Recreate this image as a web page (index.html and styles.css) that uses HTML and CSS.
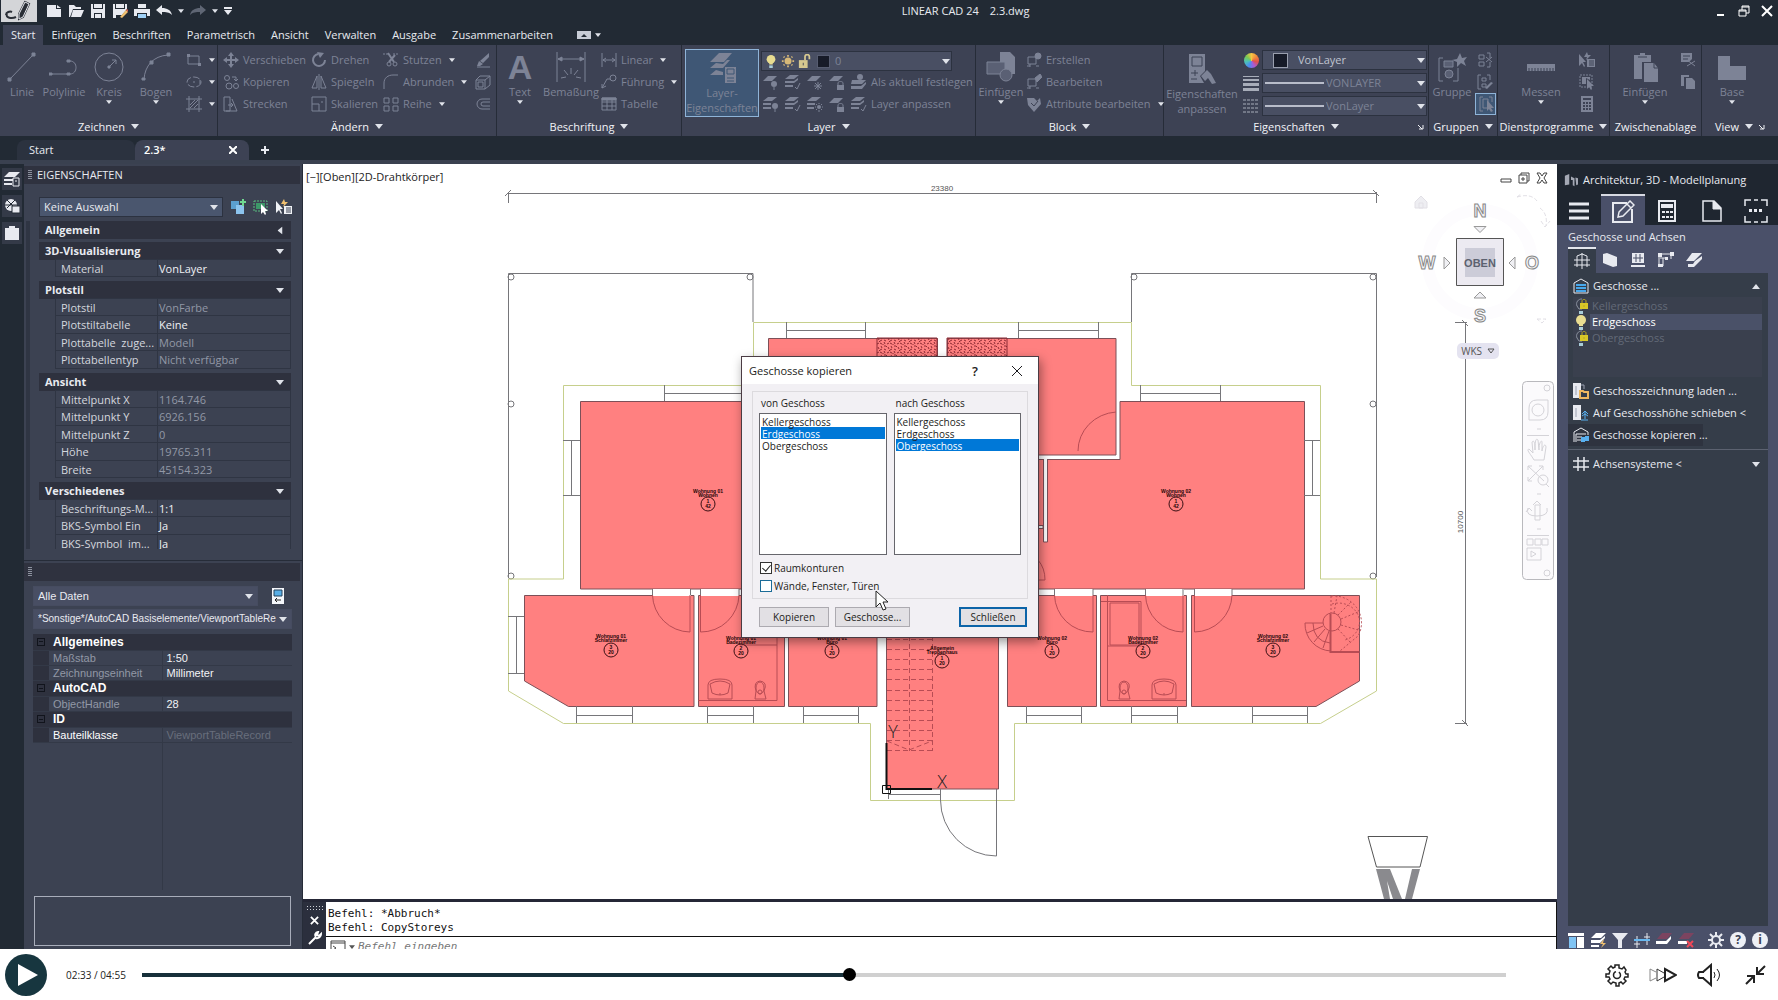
FILE: index.html
```html
<!DOCTYPE html>
<html lang="de">
<head>
  <meta charset="utf-8">
  <title>LINEAR CAD 24</title>
  <link rel="stylesheet" href="styles.css">
</head>
<body>
  <!-- icon set -->
  <svg class="sprite" aria-hidden="true">
    <symbol id="i-caret" viewBox="0 0 8 5"><path d="M0 0h8L4 5z" fill="currentColor" stroke="none"/></symbol>
    <symbol id="i-new" viewBox="0 0 16 16"><path d="M1 2h9v4h5v8H1zM11 2l4 3h-4z" fill="currentColor" stroke="none"/></symbol>
    <symbol id="i-open" viewBox="0 0 16 16"><path d="M1 14V2h5l2 2h5v2H5L2 14zM5 7h11l-3 7H3z" fill="currentColor" stroke="none"/></symbol>
    <symbol id="i-save" viewBox="0 0 16 16"><path d="M1 1h2v5h10V1h2v14h-3v-5H4v5H1zM4 1h8v4H4zM5 11h6v4H5z" fill="currentColor" stroke="none"/></symbol>
    <symbol id="i-saveas" viewBox="0 0 16 16"><path d="M1 1h2v5h10V1h2v5l-5 6H4v3H1zM4 1h8v4H4z" fill="currentColor" stroke="none"/><path d="M8 14l6-7 2 2-6 6z" fill="#f0c070" stroke="none"/><path d="M14 7l1-1 2 2-1 1z" fill="#e06050" stroke="none"/></symbol>
    <symbol id="i-print" viewBox="0 0 16 16"><path d="M4 1h8v4H4zM0 6h16v7h-3v-3H3v3H0z" fill="currentColor" stroke="none"/><path d="M4 11h8v4H4z" fill="#9fd0f5" stroke="none"/></symbol>
    <symbol id="i-undo" viewBox="0 0 16 16"><path d="M0 7l6-5v3c5 0 9 2 10 7-3-3-6-3-10-3v3z" fill="currentColor" stroke="none"/></symbol>
    <symbol id="i-redo" viewBox="0 0 16 16"><path d="M16 7l-6-5v3C5 5 1 7 0 12c3-3 6-3 10-3v3z" fill="currentColor" stroke="none"/></symbol>

    <symbol id="i-line" viewBox="0 0 30 30"><path d="M3 27L26 3"/><path d="M1 26h3v3H1zM25 1h3v3h-3z" fill="currentColor"/></symbol>
    <symbol id="i-poly" viewBox="0 0 30 30"><path d="M2 22h19c8 0 8-13 0-13"/><path d="M0 21h3v2H0zM18 21h3v2h-3zM18 8h3v2h-3z" fill="currentColor"/></symbol>
    <symbol id="i-circle" viewBox="0 0 30 30"><circle cx="15" cy="15" r="14"/><path d="M15 15l7-7M18 8h4v4"/><path d="M14 14h2v2h-2z" fill="currentColor"/></symbol>
    <symbol id="i-arc" viewBox="0 0 30 30"><path d="M3 27C4 14 12 4 27 3"/><path d="M1 26h3v2H1zM9 9h3v3H9zM26 1h3v3h-3z" fill="currentColor"/></symbol>
    <symbol id="i-rect" viewBox="0 0 16 16"><path d="M2 4h11v8H2z"/><path d="M1 2h3v3H1zM12 11h3v3h-3z" fill="currentColor" stroke="none"/></symbol>
    <symbol id="i-ellipse" viewBox="0 0 16 16"><ellipse cx="8" cy="8" rx="7" ry="5" stroke-dasharray="7 2"/><path d="M7 8h2M14 6v4" /></symbol>
    <symbol id="i-hatch" viewBox="0 0 16 16"><path d="M3 0v16M13 0v16M0 3h16M0 13h16M4 9l5-5M4 12l8-8M8 12l4-4"/></symbol>
    <symbol id="i-move" viewBox="0 0 16 16"><path d="M8 2v12M2 8h12" stroke-width="2"/><path d="M8 0l3 4H5zM8 16l3-4H5zM0 8l4-3v6zM16 8l-4-3v6z" fill="currentColor" stroke="none"/></symbol>
    <symbol id="i-copy" viewBox="0 0 16 16"><circle cx="4" cy="4" r="2.500"/><circle cx="6" cy="12" r="3"/><circle cx="13" cy="12" r="2.500"/><path d="M9 3h4v4M11 5l2 2 2-2"/></symbol>
    <symbol id="i-stretch" viewBox="0 0 16 16"><path d="M1 1h6v14H1zM9 3l5 12H3M5 9h5M8 7l2 2-2 2"/></symbol>
    <symbol id="i-rotate" viewBox="0 0 16 16"><path d="M7 2a6 6 0 1 0 7 6" stroke-width="2"/><path d="M6 0l7 1-4 5z" fill="currentColor" stroke="none"/></symbol>
    <symbol id="i-mirror" viewBox="0 0 16 16"><path d="M6 2v12H1zM10 2v12h5zM8 0v16"/></symbol>
    <symbol id="i-scale" viewBox="0 0 16 16"><path d="M1 1h14v14H1zM1 8h7v7M10 6h2"/></symbol>
    <symbol id="i-trim" viewBox="0 0 16 16"><path d="M0 2h5M10 2h6" stroke-dasharray="2 1"/><path d="M5 1l6 9M12 3L6 10" stroke-width="2"/><circle cx="6" cy="12" r="2"/><circle cx="12" cy="12" r="2"/></symbol>
    <symbol id="i-fillet" viewBox="0 0 16 16"><path d="M1 15V9C1 4 5 1 10 1h5"/></symbol>
    <symbol id="i-array" viewBox="0 0 16 16"><path d="M1 2h5v5H1zM10 2h5v5h-5zM1 10h5v5H1zM10 10h5v5h-5z"/></symbol>
    <symbol id="i-erase" viewBox="0 0 16 16"><path d="M14 1v4l-6 6-3-2zM4 9l4 3-3 2H2z" fill="currentColor" stroke="none"/><path d="M2 15h13"/></symbol>
    <symbol id="i-explode" viewBox="0 0 16 16"><path d="M1 6h9v9H1zM3 8h5v5H3zM1 6l4-4h10v9l-5 4M10 6l5-4"/></symbol>
    <symbol id="i-offset" viewBox="0 0 16 16"><path d="M15 3H7a5 5 0 0 0 0 10h8M15 6H8a2 2 0 0 0 0 4h7"/></symbol>
    <symbol id="i-dim" viewBox="0 0 30 30"><path d="M1 0v30M29 0v30M2 7h26M15 16v6M8 18l4 5M22 18l-4 5M5 26l5-1M25 26l-5-1"/><path d="M2 7l4-2v4zM28 7l-4-2v4z" fill="currentColor"/></symbol>
    <symbol id="i-linear" viewBox="0 0 16 16"><path d="M1 1v14M15 1v14M2 8h12M5 6L2 8l3 2M11 6l3 2-3 2"/></symbol>
    <symbol id="i-leader" viewBox="0 0 16 16"><circle cx="12" cy="4" r="3"/><path d="M9 5H6L1 14M1 10v4l4-2"/></symbol>
    <symbol id="i-table" viewBox="0 0 16 16"><path d="M1 2h14v12H1zM1 6h14M1 10h14M6 2v12M11 2v12"/><path d="M1 2h14v2H1z" fill="currentColor"/></symbol>
    <symbol id="i-layers" viewBox="0 0 30 30"><path d="M12 0h13l-8 9H3zM9 10l-6 5h13l7-8h-3l-4 4zM9 17l-6 5h13v-3zM18 14h11v16H18z" fill="currentColor" stroke="none"/><path d="M20 16h7v5h-7zM20 25h7M20 28h7" stroke="#3f5775"/></symbol>
    <symbol id="i-lay1" viewBox="0 0 16 16"><path d="M5 2h9l-5 5H0z" fill="currentColor" stroke="none"/><circle cx="11" cy="10" r="3" fill="currentColor" stroke="none"/><path d="M11 13v3"/></symbol>
    <symbol id="i-lay2" viewBox="0 0 16 16"><path d="M5 1h9l-5 4H0zM0 7h9l4-3v2L9 9H0zM0 11h8v2H0z" fill="currentColor" stroke="none"/><path d="M10 13l2 2 3-6"/></symbol>
    <symbol id="i-lay3" viewBox="0 0 16 16"><path d="M5 2h9l-5 5H0z" fill="currentColor" stroke="none"/><path d="M11 8v8M7 12h8M8 9l6 6M14 9l-6 6"/></symbol>
    <symbol id="i-lay4" viewBox="0 0 16 16"><path d="M5 2h9l-5 5H0zM8 11h7v5H8z" fill="currentColor" stroke="none"/><path d="M9 11V9c0-2 5-2 5 0v2"/></symbol>
    <symbol id="i-lay5" viewBox="0 0 16 16"><path d="M1 6h14l-4 4H0zM0 12h10l5-4v2l-4 5H0z" fill="currentColor" stroke="none"/><circle cx="9" cy="3" r="3" fill="currentColor" stroke="none"/></symbol>
    <symbol id="i-lay6" viewBox="0 0 16 16"><path d="M5 1h9l-5 4H0zM0 7h8v2H0zM0 11h8v2H0z" fill="currentColor" stroke="none"/><circle cx="12" cy="10" r="3" fill="currentColor" stroke="none"/><path d="M12 13v3"/></symbol>
    <symbol id="i-lay7" viewBox="0 0 16 16"><path d="M5 1h9l-5 4H0zM0 7h8v2H0zM0 11h7v2H0z" fill="currentColor" stroke="none"/><circle cx="12" cy="11" r="2" fill="currentColor" stroke="none"/><path d="M12 7v1M12 14v2M8 11h1M15 11h1M9 8l1 1M15 8l-1 1M9 14l1-1M15 14l-1-1"/></symbol>
    <symbol id="i-block" viewBox="0 0 30 30"><path d="M14 0h10l5 5v17H18v-9h-4z" fill="currentColor" stroke="none"/><path d="M1 10h18v12H1z" fill="#5a6074"/><circle cx="20" cy="23" r="6" fill="#5a6074"/></symbol>
    <symbol id="i-blk" viewBox="0 0 16 16"><path d="M2 5h8v7H2zM1 14h3M10 14h3M4 12v3"/><path d="M9 4l5-4 2 3-5 5z" fill="currentColor"/></symbol>
    <symbol id="i-blknew" viewBox="0 0 16 16"><path d="M2 5h8v7H2zM1 14h3M10 14h3M4 12v3"/><circle cx="12" cy="4" r="3" fill="currentColor"/></symbol>
    <symbol id="i-attr" viewBox="0 0 16 16"><path d="M1 2h7l3 3 3-3 1 6-7 8-6-7z" fill="currentColor" stroke="none"/><path d="M5 7l3 3 4-5" stroke="#3d4254"/></symbol>
    <symbol id="i-match" viewBox="0 0 30 30"><path d="M2 0h16v17l-5 5 4 7H2z" fill="currentColor" stroke="none"/><path d="M5 3h10v9H5zM4 19h7M8 16v6M4 25h6" stroke="#3d4254"/><path d="M14 22l6-6 4 4 5 9-4 1-4-6-3 3z" fill="currentColor" stroke="none"/></symbol>
    <symbol id="i-lw" viewBox="0 0 16 16"><path d="M0 1h16v1H0zM0 4h16v2H0zM0 8h16v3H0zM0 13h16v3H0z" fill="currentColor" stroke="none"/></symbol>
    <symbol id="i-lt" viewBox="0 0 16 16"><path d="M0 2h16M0 6h16M0 10h16M0 14h16" stroke-dasharray="3 1"/></symbol>
    <symbol id="i-group" viewBox="0 0 30 30"><path d="M6 6H2v23h4M16 29h5V16"/><path d="M7 9h9v6H7z" fill="#5a6074"/><circle cx="12" cy="22" r="4" fill="#5a6074"/><path d="M23 1l2 5 5-1-3 4 2 5-5-3-4 4v-5l-5-2 5-1z" fill="currentColor" stroke="none"/></symbol>
    <symbol id="i-ungroup" viewBox="0 0 16 16"><path d="M2 3h5v4H2zM2 10h5v4H2zM10 1h3v5M10 15h3v-5M9 5l6 5M15 5l-6 5"/></symbol>
    <symbol id="i-grp" viewBox="0 0 16 16"><path d="M4 1H1v14h3M10 1h3v5M5 4h4v3H5zM5 10h4v3H5z"/><path d="M8 14l6-6 2 1-6 6z" fill="currentColor" stroke="none"/></symbol>
    <symbol id="i-grpsel" viewBox="0 0 16 16"><path d="M4 1H1v14h3M10 1h3v5M4 3h5v9H4z"/><path d="M8 4v11l2-2 2 3 2-1-2-3h3z" fill="currentColor" stroke="none"/></symbol>
    <symbol id="i-ruler" viewBox="0 0 30 30"><path d="M1 12h28v7H1z" fill="currentColor" stroke="none"/><path d="M3 19v-3M6 19v-3M9 19v-3M12 19v-3M15 19v-3M18 19v-3M21 19v-3M24 19v-3M27 19v-3" stroke="#3d4254"/></symbol>
    <symbol id="i-qsel" viewBox="0 0 16 16"><path d="M0 2v12l3-3 2 4 1-1-2-4h3zM8 0L5 5h3L7 8l5-5H9zM8 7h8v8H8z" fill="currentColor" stroke="none"/><path d="M10 9h5M10 11h5M10 13h5" stroke="#3d4254"/></symbol>
    <symbol id="i-selall" viewBox="0 0 16 16"><path d="M1 1h12v12H1z" stroke-dasharray="2 1"/><path d="M3 3h8v3l-4-2v6H3zM8 5v10l2-2 2 3 1-1-1-3h3z" fill="currentColor" stroke="none"/></symbol>
    <symbol id="i-calc" viewBox="0 0 16 16"><path d="M2 0h12v16H2z" fill="currentColor" stroke="none"/><path d="M4 3h8M4 7h2M7 7h2M10 7h2M4 10h2M7 10h2M10 10h2M4 13h2M7 13h2M10 13h2" stroke="#3d4254" stroke-width="2"/></symbol>
    <symbol id="i-paste" viewBox="0 0 30 30"><path d="M4 3h6V1h5v2h6v7h-9v17H4zM14 11h10l4 5v14H14z" fill="currentColor" stroke="none"/><path d="M8 5h9M24 11v5h4" stroke="#3d4254"/></symbol>
    <symbol id="i-cut" viewBox="0 0 16 16"><path d="M1 1h11v6l-3 3H1z" fill="currentColor" stroke="none"/><path d="M3 4h7M3 7h5" stroke="#3d4254"/><path d="M7 8l8 6M15 9l-8 5"/></symbol>
    <symbol id="i-cpy" viewBox="0 0 16 16"><path d="M1 1h8v2H4v9H1zM6 4h6l3 3v8H6z" fill="currentColor" stroke="none"/></symbol>
    <symbol id="i-base" viewBox="0 0 30 30"><path d="M1 4h12v10h16v14H1z" fill="currentColor" stroke="none"/></symbol>
    <symbol id="i-stack" viewBox="0 0 16 16"><path d="M5 1h11l-5 5H0zM0 8h9v2H0zM0 12h8v2H0z" fill="currentColor" stroke="none"/><path d="M9 7h6v8H9zM11 10h2"/></symbol>
    <symbol id="i-clip" viewBox="0 0 16 16"><path d="M1 3h4V1h6v2h4v12H1z" fill="currentColor" stroke="none"/></symbol>
    <symbol id="i-world" viewBox="0 0 16 16"><circle cx="7" cy="7" r="6" fill="currentColor" stroke="none"/><path d="M1 7h12M3 2l8 8M11 2L3 10" stroke="#222a34"/><path d="M8 8h8v7H8z" fill="currentColor" stroke="#222a34"/></symbol>
    <symbol id="i-bulb" viewBox="0 0 16 16"><circle cx="8" cy="6" r="5" fill="#e8dc90" stroke="none"/><path d="M6 10h4v2H6z" fill="#e8dc90" stroke="none"/><path d="M6 13h4v3H6z" fill="#a8ccd8" stroke="none"/></symbol>
    <symbol id="i-bulblock" viewBox="0 0 16 16"><path d="M9 1a5 5 0 0 0-5 7l2 3h3" stroke="#8c93a0"/><path d="M6 13h4v3H6z" fill="#a8ccd8" stroke="none"/><path d="M7 5h8v6H7z" fill="#d8c828" stroke="none"/><path d="M9 5V3c0-2 4-2 4 0v2M11 7v2" stroke="#b8a820"/></symbol>
    <symbol id="i-sun" viewBox="0 0 16 16"><circle cx="8" cy="8" r="4" fill="#d6b878" stroke="none"/><path d="M8 1v2M8 13v2M1 8h2M13 8h2M3 3l1 1M12 12l1 1M13 3l-1 1M4 12l-1 1" stroke="#d6b878" stroke-width="2"/></symbol>
    <symbol id="i-unlock" viewBox="0 0 16 16"><path d="M1 7h10v9H1z" fill="#d6c890" stroke="none"/><path d="M8 7V3c0-3 5-3 5 0v3" stroke="#d6c890" stroke-width="2"/><path d="M6 10v3" stroke="#3d4254"/></symbol>
    <symbol id="i-storey" viewBox="0 0 16 16"><path d="M1 15V5l7-4 7 4v10z"/><path d="M3 6h10v2H3zM3 9h10v2H3zM3 12h10v2H3z" fill="#48a8ec" stroke="none"/></symbol>
    <symbol id="i-storeyload" viewBox="0 0 16 16"><path d="M0 0h8v15H0z" fill="currentColor" stroke="none"/><path d="M8 2h3v4M3 3v9" stroke="#9aa0b0"/><path d="M7 15V8h3l1 1h4v6z" fill="#353d49" stroke="#f0b860" stroke-width="2"/></symbol>
    <symbol id="i-storeymove" viewBox="0 0 16 16"><path d="M0 0h8v15H0z" fill="currentColor" stroke="none"/><path d="M3 3v9" stroke="#9aa0b0"/><path d="M8 15h7M12 6v8M9 9l3-3 3 3M9 11l3-2 3 2" stroke="#58b0f0"/></symbol>
    <symbol id="i-storeycopy" viewBox="0 0 16 16"><path d="M1 15V5l7-4 7 4v3M3 15V7h10M4 10h5M4 13h4"/><path d="M8 10h4v5H8zM12 9h4v5h-4z" fill="#58b0f0" stroke="none"/></symbol>
    <symbol id="i-axes" viewBox="0 0 16 16"><path d="M5 1v14M11 1v14M0 5h16M0 11h16" stroke-width="1.500"/></symbol>
    <symbol id="i-grid" viewBox="0 0 16 16"><path d="M8 0v16M0 7h16M3 3v11M13 3v11M0 12h16M3 3l5-2 5 2"/></symbol>
    <symbol id="i-wall" viewBox="0 0 16 16"><path d="M1 2l4-1 10 4v9l-4 1L1 11z" fill="currentColor" stroke="none"/></symbol>
    <symbol id="i-window" viewBox="0 0 16 16"><path d="M2 1h12v10H2zM1 13h14v2H1z" fill="currentColor" stroke="none"/><path d="M6 2v8M10 2v8M3 6h10" stroke="#4a5069"/></symbol>
    <symbol id="i-beam" viewBox="0 0 16 16"><path d="M2 2h12M2 6h8M1 2v12M5 6v8M13 2v5"/><path d="M0 1h4v4H0zM12 0h4v4h-4zM0 12h5v3H0zM7 5h3v3H7z" fill="currentColor" stroke="none"/></symbol>
    <symbol id="i-slab" viewBox="0 0 16 16"><path d="M6 1h10l-8 8H0zM9 9l7-5v3l-8 8H2v-3h5z" fill="currentColor" stroke="none"/></symbol>
  </svg>

  <main class="app">
    <header class="titlebar">
      <div class="quick">
        <button class="logo" aria-label="Anwendung"><svg viewBox="0 0 36 22"><path d="M24 2l4 2-6 13-4 2v-5zM6 14c-2 4 5 5 9 3M11 12c-2-1-6 0-6 3" fill="none" stroke="#2a2e36" stroke-width="2"/><path d="M24 2l4 2-6 13-4 2v-5z" fill="#2a2e36"/></svg></button>
        <button aria-label="Neu"><svg class="ico"><use href="#i-new"/></svg></button>
        <button aria-label="Öffnen"><svg class="ico"><use href="#i-open"/></svg></button>
        <button aria-label="Speichern"><svg class="ico"><use href="#i-save"/></svg></button>
        <button aria-label="Speichern unter"><svg class="ico"><use href="#i-saveas"/></svg></button>
        <button aria-label="Drucken"><svg class="ico"><use href="#i-print"/></svg></button>
        <button aria-label="Zurück"><svg class="ico"><use href="#i-undo"/></svg><svg class="caret"><use href="#i-caret"/></svg></button>
        <button class="dim" aria-label="Wiederherstellen"><svg class="ico"><use href="#i-redo"/></svg><svg class="caret"><use href="#i-caret"/></svg></button>
        <button aria-label="Anpassen"><svg class="more" viewBox="0 0 8 8"><path d="M0 0h8v2H0zM0 3h8L4 8z" fill="currentColor"/></svg></button>
      </div>
      <h1 class="title"><span>LINEAR CAD 24</span><span>2.3.dwg</span></h1>
      <div class="winctl">
        <button aria-label="Minimieren"><svg viewBox="0 0 12 12"><path d="M2 10h7" stroke-width="2"/></svg></button>
        <button aria-label="Verkleinern"><svg viewBox="0 0 12 12"><path d="M1 5h7v6H1zM4 5V1h7v7H8M1 6h7M4 2h7"/></svg></button>
        <button aria-label="Schließen"><svg viewBox="0 0 12 12"><path d="M1 1l10 10M11 1L1 11" stroke-width="2"/></svg></button>
      </div>
    </header>

    <nav class="tabs">
      <a class="active" href="#">Start</a>
      <a href="#">Einfügen</a>
      <a href="#">Beschriften</a>
      <a href="#">Parametrisch</a>
      <a href="#">Ansicht</a>
      <a href="#">Verwalten</a>
      <a href="#">Ausgabe</a>
      <a href="#">Zusammenarbeiten</a>
      <button aria-label="Multifunktionsleiste"><svg class="mini" viewBox="0 0 14 8"><path d="M0 0h14v8H0z" fill="#c8ccd6"/><path d="M4 6h6L7 3z" fill="#222a34"/></svg><svg class="caret"><use href="#i-caret"/></svg></button>
    </nav>

    <section class="ribbon">
      <div class="panel draw">
        <div class="panel-body">
          <button class="big"><svg><use href="#i-line"/></svg>Linie</button>
          <button class="big"><svg><use href="#i-poly"/></svg>Polylinie</button>
          <button class="big"><svg><use href="#i-circle"/></svg>Kreis<svg class="caret"><use href="#i-caret"/></svg></button>
          <button class="big"><svg><use href="#i-arc"/></svg>Bogen<svg class="caret"><use href="#i-caret"/></svg></button>
          <div class="stack">
            <button class="tool" aria-label="Rechteck"><svg class="ico"><use href="#i-rect"/></svg><svg class="caret"><use href="#i-caret"/></svg></button>
            <button class="tool" aria-label="Ellipse"><svg class="ico"><use href="#i-ellipse"/></svg><svg class="caret"><use href="#i-caret"/></svg></button>
            <button class="tool" aria-label="Schraffur"><svg class="ico"><use href="#i-hatch"/></svg><svg class="caret"><use href="#i-caret"/></svg></button>
          </div>
        </div>
        <button class="panel-title">Zeichnen<svg class="caret"><use href="#i-caret"/></svg></button>
      </div>

      <div class="panel modify">
        <div class="panel-body">
          <div class="stack">
            <button class="tool"><svg class="ico"><use href="#i-move"/></svg>Verschieben</button>
            <button class="tool"><svg class="ico"><use href="#i-copy"/></svg>Kopieren</button>
            <button class="tool"><svg class="ico"><use href="#i-stretch"/></svg>Strecken</button>
          </div>
          <div class="stack">
            <button class="tool"><svg class="ico"><use href="#i-rotate"/></svg>Drehen</button>
            <button class="tool"><svg class="ico"><use href="#i-mirror"/></svg>Spiegeln</button>
            <button class="tool"><svg class="ico"><use href="#i-scale"/></svg>Skalieren</button>
          </div>
          <div class="stack">
            <button class="tool"><svg class="ico"><use href="#i-trim"/></svg>Stutzen<svg class="caret"><use href="#i-caret"/></svg></button>
            <button class="tool"><svg class="ico"><use href="#i-fillet"/></svg>Abrunden<svg class="caret"><use href="#i-caret"/></svg></button>
            <button class="tool"><svg class="ico"><use href="#i-array"/></svg>Reihe<svg class="caret"><use href="#i-caret"/></svg></button>
          </div>
          <div class="stack">
            <button class="tool" aria-label="Löschen"><svg class="ico"><use href="#i-erase"/></svg></button>
            <button class="tool" aria-label="Ursprung"><svg class="ico"><use href="#i-explode"/></svg></button>
            <button class="tool" aria-label="Versetzen"><svg class="ico"><use href="#i-offset"/></svg></button>
          </div>
        </div>
        <button class="panel-title">Ändern<svg class="caret"><use href="#i-caret"/></svg></button>
      </div>

      <div class="panel annotate">
        <div class="panel-body">
          <button class="big"><span class="letter">A</span>Text<svg class="caret"><use href="#i-caret"/></svg></button>
          <button class="big"><svg><use href="#i-dim"/></svg>Bemaßung</button>
          <div class="stack">
            <button class="tool"><svg class="ico"><use href="#i-linear"/></svg>Linear<svg class="caret"><use href="#i-caret"/></svg></button>
            <button class="tool"><svg class="ico"><use href="#i-leader"/></svg>Führung<svg class="caret"><use href="#i-caret"/></svg></button>
            <button class="tool"><svg class="ico"><use href="#i-table"/></svg>Tabelle</button>
          </div>
        </div>
        <button class="panel-title">Beschriftung<svg class="caret"><use href="#i-caret"/></svg></button>
      </div>

      <div class="panel layer">
        <div class="panel-body">
          <button class="big pressed"><svg><use href="#i-layers"/></svg>Layer-<br>Eigenschaften</button>
          <div class="stack">
            <div class="drop">
              <svg class="ico"><use href="#i-bulb"/></svg><svg class="ico"><use href="#i-sun"/></svg><svg class="ico"><use href="#i-unlock"/></svg>
              <span class="swatch"></span>
              <select aria-label="Layer"><option>0</option></select>
              <svg class="caret"><use href="#i-caret"/></svg>
            </div>
            <div class="row">
              <button class="tool" aria-label="Aus"><svg class="ico"><use href="#i-lay1"/></svg></button>
              <button class="tool" aria-label="Isolieren"><svg class="ico"><use href="#i-lay2"/></svg></button>
              <button class="tool" aria-label="Frieren"><svg class="ico"><use href="#i-lay3"/></svg></button>
              <button class="tool" aria-label="Sperren"><svg class="ico"><use href="#i-lay4"/></svg></button>
              <button class="tool"><svg class="ico"><use href="#i-lay5"/></svg>Als aktuell festlegen</button>
            </div>
            <div class="row">
              <button class="tool" aria-label="Ein"><svg class="ico"><use href="#i-lay6"/></svg></button>
              <button class="tool" aria-label="Isolierung aufheben"><svg class="ico"><use href="#i-lay2"/></svg></button>
              <button class="tool" aria-label="Tauen"><svg class="ico"><use href="#i-lay7"/></svg></button>
              <button class="tool" aria-label="Entsperren"><svg class="ico"><use href="#i-lay4"/></svg></button>
              <button class="tool"><svg class="ico"><use href="#i-lay2"/></svg>Layer anpassen</button>
            </div>
          </div>
        </div>
        <button class="panel-title">Layer<svg class="caret"><use href="#i-caret"/></svg></button>
      </div>

      <div class="panel block">
        <div class="panel-body">
          <button class="big"><svg><use href="#i-block"/></svg>Einfügen<svg class="caret"><use href="#i-caret"/></svg></button>
          <div class="stack">
            <button class="tool"><svg class="ico"><use href="#i-blknew"/></svg>Erstellen</button>
            <button class="tool"><svg class="ico"><use href="#i-blk"/></svg>Bearbeiten</button>
            <button class="tool"><svg class="ico"><use href="#i-attr"/></svg>Attribute bearbeiten<svg class="caret"><use href="#i-caret"/></svg></button>
          </div>
        </div>
        <button class="panel-title">Block<svg class="caret"><use href="#i-caret"/></svg></button>
      </div>

      <div class="panel props">
        <div class="panel-body">
          <button class="big"><svg><use href="#i-match"/></svg>Eigenschaften<br>anpassen</button>
          <div class="stack icons">
            <span class="wheel"></span>
            <svg class="ico"><use href="#i-lw"/></svg>
            <svg class="ico"><use href="#i-lt"/></svg>
          </div>
          <div class="stack">
            <div class="drop bright"><span class="swatch"></span><select aria-label="Farbe"><option>VonLayer</option></select><svg class="caret"><use href="#i-caret"/></svg></div>
            <div class="drop"><span class="rule"></span><select aria-label="Linienstärke"><option>VONLAYER</option></select><svg class="caret"><use href="#i-caret"/></svg></div>
            <div class="drop"><span class="rule"></span><select aria-label="Linientyp"><option>VonLayer</option></select><svg class="caret"><use href="#i-caret"/></svg></div>
          </div>
        </div>
        <button class="panel-title">Eigenschaften<svg class="caret"><use href="#i-caret"/></svg><svg class="launch" viewBox="0 0 6 6"><path d="M0 1l4 4M5 1v4H1"/></svg></button>
      </div>

      <div class="panel groups">
        <div class="panel-body">
          <button class="big"><svg><use href="#i-group"/></svg>Gruppe</button>
          <div class="stack">
            <button class="tool" aria-label="Gruppierung aufheben"><svg class="ico"><use href="#i-ungroup"/></svg></button>
            <button class="tool" aria-label="Gruppe bearbeiten"><svg class="ico"><use href="#i-grp"/></svg></button>
            <button class="tool pressed" aria-label="Gruppenauswahl"><svg class="ico"><use href="#i-grpsel"/></svg></button>
          </div>
        </div>
        <button class="panel-title">Gruppen<svg class="caret"><use href="#i-caret"/></svg></button>
      </div>

      <div class="panel utils">
        <div class="panel-body">
          <button class="big"><svg><use href="#i-ruler"/></svg>Messen<svg class="caret"><use href="#i-caret"/></svg></button>
          <div class="stack">
            <button class="tool" aria-label="Schnellauswahl"><svg class="ico"><use href="#i-qsel"/></svg></button>
            <button class="tool" aria-label="Alles auswählen"><svg class="ico"><use href="#i-selall"/></svg></button>
            <button class="tool" aria-label="Rechner"><svg class="ico"><use href="#i-calc"/></svg></button>
          </div>
        </div>
        <button class="panel-title">Dienstprogramme<svg class="caret"><use href="#i-caret"/></svg></button>
      </div>

      <div class="panel clip">
        <div class="panel-body">
          <button class="big"><svg><use href="#i-paste"/></svg>Einfügen<svg class="caret"><use href="#i-caret"/></svg></button>
          <div class="stack">
            <button class="tool" aria-label="Ausschneiden"><svg class="ico"><use href="#i-cut"/></svg></button>
            <button class="tool" aria-label="Kopieren"><svg class="ico"><use href="#i-cpy"/></svg></button>
          </div>
        </div>
        <button class="panel-title">Zwischenablage</button>
      </div>

      <div class="panel view">
        <div class="panel-body">
          <button class="big"><svg><use href="#i-base"/></svg>Base<svg class="caret"><use href="#i-caret"/></svg></button>
        </div>
        <button class="panel-title">View<svg class="caret"><use href="#i-caret"/></svg><svg class="launch" viewBox="0 0 6 6"><path d="M0 1l4 4M5 1v4H1"/></svg></button>
      </div>
    </section>

    <nav class="files">
      <a href="#">Start</a>
      <a class="active" href="#">2.3*<svg viewBox="0 0 8 8"><path d="M0 0l8 8M8 0L0 8"/></svg></a>
      <button aria-label="Neue Zeichnung"><svg viewBox="0 0 8 8"><path d="M4 0v8M0 4h8"/></svg></button>
    </nav>

    <div class="work">
      <aside class="rail">
        <button aria-label="Layer"><svg class="ico"><use href="#i-stack"/></svg></button>
        <button aria-label="Welt"><svg class="ico"><use href="#i-world"/></svg></button>
        <button aria-label="Eigenschaften"><svg class="ico"><use href="#i-clip"/></svg></button>
      </aside>

      <aside class="palettes">
        <section class="palette">
          <h2 class="grip">EIGENSCHAFTEN</h2>
          <div class="picker">
            <div class="drop light"><select aria-label="Auswahl"><option>Keine Auswahl</option></select><svg class="caret"><use href="#i-caret"/></svg></div>
            <button aria-label="Hinzufügen"><svg class="ico" viewBox="0 0 16 16"><path d="M1 2h8v8H1z" fill="#5b9fd0" stroke="none"/><path d="M6 6h8v9H6z" fill="#8cc4ee" stroke="none"/><path d="M13 0v7M10 3h6" stroke="#70d890" stroke-width="2"/></svg></button>
            <button aria-label="Objekte wählen"><svg class="ico" viewBox="0 0 16 16"><path d="M1 2h13v10H1z" stroke="#58c080" stroke-dasharray="2 1"/><path d="M3 4h9v6H3z" fill="#3c9868" stroke="none"/><path d="M8 5v10l2-2 2 3 1-1-1-3h3z" fill="#fff" stroke="none"/></svg></button>
            <button aria-label="Schnellauswahl"><svg class="ico" viewBox="0 0 16 16"><path d="M0 2v12l3-3 2 4 1-1-2-4h3zM8 7h8v8H8z" fill="#f0f2f6" stroke="none"/><path d="M8 0L5 5h3L7 8l5-5H9z" fill="#f0c070" stroke="none"/><path d="M10 9h5M10 11h5M10 13h5" stroke="#3d4254"/></svg></button>
          </div>
          <div class="props-scroll">
            <h3 class="closed">Allgemein<svg class="caret"><use href="#i-caret"/></svg></h3>
            <h3>3D-Visualisierung<svg class="caret"><use href="#i-caret"/></svg></h3>
            <table>
              <tr><th>Material</th><td class="on">VonLayer</td></tr>
            </table>
            <h3>Plotstil<svg class="caret"><use href="#i-caret"/></svg></h3>
            <table>
              <tr><th>Plotstil</th><td>VonFarbe</td></tr>
              <tr><th>Plotstiltabelle</th><td class="on">Keine</td></tr>
              <tr><th>Plottabelle &nbsp;zuge...</th><td>Modell</td></tr>
              <tr><th>Plottabellentyp</th><td>Nicht verfügbar</td></tr>
            </table>
            <h3>Ansicht<svg class="caret"><use href="#i-caret"/></svg></h3>
            <table>
              <tr><th>Mittelpunkt X</th><td>1164.746</td></tr>
              <tr><th>Mittelpunkt Y</th><td>6926.156</td></tr>
              <tr><th>Mittelpunkt Z</th><td>0</td></tr>
              <tr><th>Höhe</th><td>19765.311</td></tr>
              <tr><th>Breite</th><td>45154.323</td></tr>
            </table>
            <h3>Verschiedenes<svg class="caret"><use href="#i-caret"/></svg></h3>
            <table>
              <tr><th>Beschriftungs-M...</th><td class="on">1:1</td></tr>
              <tr><th>BKS-Symbol Ein</th><td class="on">Ja</td></tr>
              <tr><th>BKS-Symbol &nbsp;im...</th><td class="on">Ja</td></tr>
            </table>
          </div>
        </section>

        <section class="palette data">
          <h2 class="grip"></h2>
          <div class="picker">
            <div class="drop"><select aria-label="Daten"><option>Alle Daten</option></select><svg class="caret"><use href="#i-caret"/></svg></div>
            <button aria-label="Übertragen"><svg class="ico" viewBox="0 0 16 16"><path d="M2 0h12v16H2z" fill="#f4f6fa" stroke="none"/><path d="M4 2h8v6H4z" fill="#58aee6" stroke="#23405a"/><path d="M5 12h6M7 10l-2 2 2 2" stroke="#222"/></svg></button>
          </div>
          <div class="drop path"><select aria-label="Klasse"><option>*Sonstige*/AutoCAD Basiselemente/ViewportTableRe</option></select><svg class="caret"><use href="#i-caret"/></svg></div>
          <table>
            <tr class="head"><td class="tog"><i></i></td><th colspan="2">Allgemeines</th></tr>
            <tr><td class="tog"></td><th>Maßstab</th><td>1:50</td></tr>
            <tr><td class="tog"></td><th>Zeichnungseinheit</th><td>Millimeter</td></tr>
            <tr class="head"><td class="tog"><i></i></td><th colspan="2">AutoCAD</th></tr>
            <tr><td class="tog"></td><th>ObjectHandle</th><td>28</td></tr>
            <tr class="head"><td class="tog"><i></i></td><th colspan="2">ID</th></tr>
            <tr class="current"><td class="tog"></td><th>Bauteilklasse</th><td>ViewportTableRecord</td></tr>
          </table>
          <div class="rest"></div>
          <div class="hint"></div>
        </section>
      </aside>

      <section class="center">
        <div class="canvas">
          <svg class="drawing" viewBox="303 164 1254 735" preserveAspectRatio="xMinYMid meet">
            <defs>
              <pattern id="gravel" width="10" height="9" patternUnits="userSpaceOnUse">
                <path d="M0 1l2 1M4 0l1 2M7 2l2-1M1 4l1 2M4 4h2M8 5l1 2M0 8l2-1M4 7l2 1M6 5l1-1M9 8l1 1M3 2l0 1" stroke="#8c2a34" fill="none"/>
              </pattern>
              <g id="sink"><path d="M0 20V6q0-6 12-6t12 6v14z"/><path d="M2 5q10-6 20 0l-2 9q-8 4-16 0zM12 14v2"/></g>
              <g id="wc"><path d="M1 18l1-8q-3-9 4-10 8 1 4 10l2 8z"/><ellipse cx="6" cy="7" rx="4" ry="6"/><circle cx="6" cy="11" r="2"/></g>
            </defs>

            <!-- dimensions and terraces -->
            <g class="gray">
              <path d="M508 193.500H1376.500M508.500 192v11M1376.500 192v11M505 196l6-6M1373 190l6 6"/>
              <path d="M1465.500 322V723M1455 322.500h12M1455 723.500h12M1462 320l6 6M1462 720l6 6"/>
              <path d="M508.500 577V273.500H753V322M1131.500 322V273.500H1376.500V577"/>
              <circle cx="511" cy="277" r="3"/><circle cx="750" cy="277" r="3"/><circle cx="511" cy="404" r="3"/><circle cx="511" cy="576" r="3"/>
              <circle cx="1134" cy="277" r="3"/><circle cx="1373" cy="277" r="3"/><circle cx="1373" cy="404" r="3"/><circle cx="1373" cy="576" r="3"/>
            </g>
            <path class="outer" d="M753.500 322.500H1131.500V385.500H1320.500V579H1376.500V691L1320.500 723.500H1014.500V800.500H870.500V723.500H563.500L508.500 691V579H563.500V385.500H753.500z"/>

            <!-- rooms -->
            <g class="room">
              <path d="M580.500 401.500H850V589H580.500zM768.500 338.500H937.500V450H768.500zM947.500 338.500H1116V455H947.500z"/>
              <path d="M1120 401.500H1304.500V589H1000V459.500H1120z"/>
              <path d="M524.500 595.500H694V706.500H568.500L524.500 681zM698.500 595.500H784.500V706.500H698.500zM788.500 595.500H877V706.500H788.500zM886.500 595.500H998.500V789H886.500z"/>
              <path d="M1007.500 595.500H1096.500V706.500H1007.500zM1100.500 595.500H1186.500V706.500H1100.500zM1191.500 595.500H1359.500V681L1316 706.500H1191.500z"/>
            </g>
            <path d="M877 338h60v30h-60zM947 338h60v30h-60z" fill="url(#gravel)" stroke="#8c2a34"/>
            <path class="wall" d="M1043.500 459V542h4V459M1030 525.500h13v3h-13"/>
            <path d="M1044 456h3v6h-3zM653 589h38v7h-38zM701 589h38v7h-38zM1055 589h38v7h-38zM1146 589h38v7h-38zM1195 589h37v7h-37z" fill="#fff"/>
            <path class="gray" d="M652.500 589v6M690.500 589v6M700.500 589v6M739 589v6M1054.500 589v6M1093 589v6M1145.500 589v6M1183 589v6M1194.500 589v6M1232 589v6"/>

            <!-- windows -->
            <g class="gray">
              <path d="M786.500 322v16M865.500 322v16M786 330.500h79M1018.500 322v16M1098.500 322v16M1018 330.500h80"/>
              <path d="M664.500 385v16M664 393.500h90M1140.500 385v16M1220.500 385v16M1140 393.500h80"/>
              <path d="M563 440.500h17M563 495.500h17M571.500 440v55M1304 440.500h16M1304 495.500h16M1312.500 440v55M508 616.500h16M508 673.500h16M516.500 616v57"/>
              <path d="M576.500 706v17M632.500 706v17M576 715.500h56M707.500 706v17M753.500 706v17M707 715.500h46M803.500 706v17M858.500 706v17M803 715.500h55"/>
              <path d="M1026.500 706v17M1081.500 706v17M1026 715.500h55M1131.500 706v17M1177.500 706v17M1131 715.500h46M1252.500 706v17M1307.500 706v17M1252 715.500h55"/>
              <path d="M888.500 790v9M888 794.500h52M940.500 789v11A56 56 0 0 0 996.500 856V789"/>
            </g>

            <!-- doors, stairs and sanitary -->
            <g class="detail">
              <path d="M652.500 595A38 38 0 0 0 690 632V595M739 595A38 38 0 0 1 700.500 632V595M1054.500 595A38 38 0 0 0 1093 632V595M1145.500 595A38 38 0 0 0 1183 632V595M1232 595A38 38 0 0 1 1194.500 632V595"/>
              <path d="M1078 451A41 39 0 0 1 1116 412M1038 560q7 8 7 20h-7M698 700.500H777V595M740 645h37"/>
              <path d="M1186 700.500H1107.500V595M1101 601.500h40v44M1110 603h29v42h-29zM1107 646h34"/>
              <use href="#sink" x="708" y="679"/><use href="#wc" x="754" y="681"/><use href="#wc" x="1118" y="681"/><use href="#sink" x="1152" y="679"/>
              <path stroke-dasharray="5 3" d="M887 639.500h45M887 649.500h45M887 659.500h45M887 669.500h45M887 679.500h45M887 690.500h45M887 700.500h45M887 710.500h45M887 720.500h45M887 730.500h45M887 740.500h45M887 750.500h45M909.500 636v115M932.500 636v115M887 741l22 9 23-9"/>
              <circle cx="1332" cy="622" r="9"/>
              <path d="M1323 623h-18A27 27 0 0 0 1331 651M1323 626l-16 7M1325 629l-11 13M1329 631l-6 17M1313 623q0 18 17 20"/>
              <path stroke-dasharray="2 2" d="M1331 596A28 27 0 0 1 1358 636L1340 651M1332 604A20 18 0 0 1 1345 640M1334 613l3-17M1338 615l13-13M1341 619l17-7M1341 625l17 5M1338 629l12 13M1331 596v17"/>
              <path d="M1330.500 614v38h29" stroke-width="2"/>
            </g>

            <!-- room stamps -->
            <g class="stamp">
              <circle cx="708" cy="504" r="7"/><text x="708" y="493">Wohnung 01</text><text x="708" y="497">Wohnen</text><text x="708" y="503">1</text><text x="708" y="508">42</text>
              <circle cx="1176" cy="504" r="7"/><text x="1176" y="493">Wohnung 02</text><text x="1176" y="497">Wohnen</text><text x="1176" y="503">1</text><text x="1176" y="508">42</text>
              <circle cx="611" cy="650" r="7"/><text x="611" y="638">Wohnung 01</text><text x="611" y="642">Schlafzimmer</text><text x="611" y="649">3</text><text x="611" y="654">20</text>
              <circle cx="741" cy="651" r="7"/><text x="741" y="640">Wohnung 01</text><text x="741" y="644">Badezimmer</text><text x="741" y="650">2</text><text x="741" y="655">20</text>
              <circle cx="832" cy="651" r="7"/><text x="832" y="640">Wohnung 01</text><text x="832" y="644">Büro</text><text x="832" y="650">1</text><text x="832" y="655">20</text>
              <circle cx="942" cy="661" r="7"/><text x="942" y="650">Allgemein</text><text x="942" y="654">Treppenhaus</text><text x="942" y="660">1</text><text x="942" y="665">20</text>
              <circle cx="1052" cy="651" r="7"/><text x="1052" y="640">Wohnung 02</text><text x="1052" y="644">Büro</text><text x="1052" y="650">1</text><text x="1052" y="655">20</text>
              <circle cx="1143" cy="651" r="7"/><text x="1143" y="640">Wohnung 02</text><text x="1143" y="644">Badezimmer</text><text x="1143" y="650">2</text><text x="1143" y="655">20</text>
              <circle cx="1273" cy="650" r="7"/><text x="1273" y="638">Wohnung 02</text><text x="1273" y="642">Schlafzimmer</text><text x="1273" y="649">3</text><text x="1273" y="654">20</text>
            </g>
            <text class="dimtext" x="942" y="191">23380</text>
            <text class="dimtext" transform="translate(1463 522) rotate(-90)">10700</text>

            <!-- ucs symbol -->
            <path d="M886.500 743v46H932" fill="none" stroke="#111" stroke-width="2"/>
            <path d="M882.500 785.500h8v8h-8z" fill="none" stroke="#111"/>
            <text class="ucs" x="893" y="738">Y</text>
            <text class="ucs" x="942" y="788">X</text>

            <!-- north arrow -->
            <path d="M1368 836.500h59.500L1420 867h-43.500z" fill="none" stroke="#555"/>
            <path d="M1376 869h14l12 30h-9l-6-18 3 18h-6zM1412 869h8l-8 30h-7z" fill="#8a8a8e"/>

            <!-- view cube -->
            <circle cx="1480" cy="262" r="52" fill="none" stroke="#fdfcfe" stroke-width="12"/>
            <path d="M1456.500 238.500h47v47h-47z" fill="#eceaf1" stroke="#555"/>
            <path d="M1465 248h30v29h-30z" fill="#ccccd8"/>
            <g class="cube">
              <text class="face" x="1480" y="267">OBEN</text>
              <text x="1480" y="217">N</text><text x="1427" y="269">W</text><text x="1532" y="269">O</text><text x="1480" y="322">S</text>
            </g>
            <path d="M1474 226.500h12l-6 6zM1474 298h12l-6-6zM1444 257v12l6-6zM1515 257v12l-6-6z" fill="#f0f0f4" stroke="#999"/>
            <g fill="none" stroke="#e2e0e6">
              <path d="M1415 202l6-6 6 6v6h-12zM1419 203h4v5h-4z" fill="#eeeef2"/>
              <path stroke-dasharray="4 2" d="M1517 197q14-4 20 4M1517 197l4-3M1540 208q8 6 6 18M1541 221l4 6 5-6M1537 319h9l-4 4z"/>
            </g>

            <!-- navigation bar -->
            <rect x="1522.500" y="381.500" width="31" height="198" rx="4" fill="#fbfafc" stroke="#b9b9bd"/>
            <g fill="none" stroke="#d4d3d8">
              <circle cx="1547" cy="388" r="3"/><circle cx="1547" cy="573" r="3"/>
              <path d="M1529 420v-12q0-8 8-8h11v12q0 8-8 8z"/><circle cx="1538" cy="410" r="6"/>
              <path d="M1527 435.500h22M1527 535.500h22M1537 429h4M1537 494h4M1537 529h4"/>
              <path d="M1534 460c-4-7-8-10-5-11l4 4-1-11c2-2 3 0 3 8 0-10 1-12 3-10l1 10c0-9 3-10 3-8v9c1-7 4-7 4-4l-2 13z"/>
              <path d="M1528 466l16 15M1543 466l-15 15M1528 470v-4h4M1539 466h4v4M1528 477v4h4"/><circle cx="1543" cy="480" r="5"/><path d="M1546 484l3 3"/>
              <path d="M1535 505h5v15h-5zM1528 508q-3 8 9 8t10-8M1526 512l3-4 3 3M1533 505l4-4 4 4"/>
              <path d="M1527 539h6v6h-6zM1535 539h6v6h-6zM1542 539h6v6h-6zM1527 548h14v12h-14zM1531 551v6l5-3z"/>
            </g>
          </svg>

          <div class="viewlabel">[−][Oben][2D-Drahtkörper]</div>
          <div class="viewctl">
            <button aria-label="Minimieren"><svg viewBox="0 0 12 12"><path d="M1 7h10v3H1z"/></svg></button>
            <button aria-label="Wiederherstellen"><svg viewBox="0 0 12 12"><path d="M1 3h8v8H1zM3 3V1h8v8H9M4 6h2v2H4z"/></svg></button>
            <button aria-label="Schließen"><svg viewBox="0 0 12 12"><path d="M1 1h3l2 3 2-3h3L8 6l3 5H8L6 8l-2 3H1l3-5z"/></svg></button>
          </div>
          <button class="wks">WKS<svg viewBox="0 0 8 6"><path d="M1 1h6L4 5z"/></svg></button>

          <form class="dialog" role="dialog" aria-label="Geschosse kopieren">
            <div class="dialog-title">
              <h2>Geschosse kopieren</h2>
              <button type="button" class="help">?</button>
              <button type="button" class="close" aria-label="Schließen"><svg viewBox="0 0 10 10"><path d="M0 0l10 10M10 0L0 10"/></svg></button>
            </div>
            <div class="group">
              <div class="lists">
                <div>
                  <label for="from">von Geschoss</label>
                  <select id="from" size="11"><option>Kellergeschoss</option><option selected>Erdgeschoss</option><option>Obergeschoss</option></select>
                </div>
                <div>
                  <label for="to">nach Geschoss</label>
                  <select id="to" size="11"><option>Kellergeschoss</option><option>Erdgeschoss</option><option selected>Obergeschoss</option></select>
                </div>
              </div>
              <label class="check"><input type="checkbox" checked>Raumkonturen</label>
              <label class="check hover"><input type="checkbox">Wände, Fenster, Türen</label>
            </div>
            <div class="actions">
              <button type="button">Kopieren</button>
              <button type="button" class="wide">Geschosse...</button>
              <button type="button" class="default">Schließen</button>
            </div>
          </form>
          <svg class="cursor" viewBox="0 0 14 21"><path d="M1 1v16l4-4 3 7 3-1-3-7h5z" fill="#fff" stroke="#222"/></svg>
        </div>

        <div class="command">
          <div class="cmd-side">
            <i class="dots"></i>
            <button aria-label="Schließen"><svg viewBox="0 0 10 10"><path d="M1 1l8 8M9 1L1 9" stroke="#fff" stroke-width="2"/></svg></button>
            <button aria-label="Anpassen"><svg class="wrench" viewBox="0 0 14 14"><path d="M1 13l7-7M8 6a3 3 0 0 1 2-5l-1 3 2 1 2-2a4 4 0 0 1-5 4" fill="none" stroke="#fff" stroke-width="2"/></svg></button>
          </div>
          <div class="cmd-main">
            <p>Befehl: *Abbruch*</p>
            <p>Befehl: CopyStoreys</p>
            <div class="cmd-line">
              <svg viewBox="0 0 16 14"><path d="M1 1h14v12H1zM1 3h14M3 6l3 2-3 2M8 11h4" fill="none" stroke="#444"/></svg>
              <svg class="caret"><use href="#i-caret"/></svg>
              <input type="text" placeholder="Befehl eingeben" aria-label="Befehl">
            </div>
          </div>
        </div>
      </section>

      <aside class="planner">
        <h2><svg class="ico" viewBox="0 0 16 16"><path d="M1 3l5-2v12l-5 1zM8 4l4 2v9l-2-1V8H8zM13 5l3 1v7l-2 1z" fill="#a4a8b4" stroke="none"/></svg>Architektur, 3D - Modellplanung</h2>
        <nav class="modes">
          <button aria-label="Menü"><svg viewBox="0 0 24 24"><path d="M2 5h20M2 12h20M2 19h20" stroke-width="3"/></svg></button>
          <button class="active" aria-label="Bearbeiten"><svg viewBox="0 0 24 24"><path d="M16 3H2v19h19V9" stroke-width="2"/><path d="M8 12L19 1l4 4-11 11-5 1zM16 4l4 4" stroke-width="1.500"/></svg></button>
          <button aria-label="Rechner"><svg viewBox="0 0 24 24"><path d="M4 2h16v20H4z" stroke-width="2"/><path d="M6 5h12v4H6zM7 12h3v2H7zM11 12h3v2h-3zM15 12h3v2h-3zM7 17h3v2H7zM11 17h3v2h-3zM15 17h3v2h-3z" fill="currentColor" stroke="none"/></svg></button>
          <button aria-label="Dokument"><svg viewBox="0 0 24 24"><path d="M3 2h11l7 7v13H3z" stroke-width="1.500"/><path d="M13 2v8h8z" fill="currentColor"/></svg></button>
          <button aria-label="Mehr"><svg viewBox="0 0 24 24"><path d="M1 7V1h6M10 1h4M17 1h6v6M23 17v6h-6M14 23h-4M7 23H1v-6" stroke-width="1.500"/><path d="M5 10h3v3H5zM10 10h3v3h-3zM15 10h3v3h-3z" fill="currentColor" stroke="none"/></svg></button>
        </nav>
        <h3>Geschosse und Achsen</h3>
        <nav class="subs">
          <button class="active" aria-label="Achsen"><svg class="ico"><use href="#i-grid"/></svg></button>
          <button aria-label="Wand"><svg class="ico"><use href="#i-wall"/></svg></button>
          <button aria-label="Fenster"><svg class="ico"><use href="#i-window"/></svg></button>
          <button aria-label="Träger"><svg class="ico"><use href="#i-beam"/></svg></button>
          <button aria-label="Decke"><svg class="ico"><use href="#i-slab"/></svg></button>
        </nav>
        <div class="tree">
          <button class="item"><svg class="ico"><use href="#i-storey"/></svg>Geschosse ...<svg class="caret up"><use href="#i-caret"/></svg></button>
          <ul class="storeys">
            <li><svg class="ico"><use href="#i-bulblock"/></svg><span>Kellergeschoss</span></li>
            <li class="active"><svg class="ico"><use href="#i-bulb"/></svg><span>Erdgeschoss</span></li>
            <li><svg class="ico"><use href="#i-bulblock"/></svg><span>Obergeschoss</span></li>
          </ul>
          <button class="item"><svg class="ico"><use href="#i-storeyload"/></svg>Geschosszeichnung laden ...</button>
          <button class="item"><svg class="ico"><use href="#i-storeymove"/></svg>Auf Geschosshöhe schieben &lt;</button>
          <button class="item hover"><svg class="ico"><use href="#i-storeycopy"/></svg>Geschosse kopieren ...</button>
          <button class="item last"><svg class="ico"><use href="#i-axes"/></svg>Achsensysteme &lt;<svg class="caret"><use href="#i-caret"/></svg></button>
        </div>
        <div class="tray">
          <button aria-label="Ansicht"><svg class="ico" viewBox="0 0 16 16"><path d="M0 1h16v3H0zM9 5h7v11H9z" fill="#fff" stroke="none"/><path d="M1 5h7v11H1z" fill="#80c4f4" stroke="none"/></svg></button>
          <button aria-label="Layer"><svg class="ico" viewBox="0 0 16 16"><path d="M6 1h10l-5 5H1zM1 8h9l5-4v2l-5 5H1zM1 13h8v2H1z" fill="#fff" stroke="none"/><path d="M14 7l-4 5h3l-2 4 5-5h-3z" fill="#f0c070" stroke="none"/></svg></button>
          <button aria-label="Filter"><svg class="ico" viewBox="0 0 16 16"><path d="M0 1h16l-6 7v8H6V8z" fill="currentColor" stroke="none"/></svg></button>
          <button aria-label="Maß"><svg class="ico" viewBox="0 0 16 16"><path d="M3 4v12M13 1v12M0 12h6M10 5h6" /><path d="M0 8h16" stroke="#68b8f0" stroke-width="2"/></svg></button>
          <button aria-label="Ebene"><svg class="ico" viewBox="0 0 16 16"><path d="M6 1h10l-5 6H1z" fill="#7c4460" stroke="none"/><path d="M0 9h10l5-5v3l-4 5H0z" fill="#fff" stroke="none"/></svg></button>
          <button aria-label="Ebene löschen"><svg class="ico" viewBox="0 0 16 16"><path d="M6 1h10l-5 6H1z" fill="#7c4460" stroke="none"/><path d="M0 9h9v3H0z" fill="#fff" stroke="none"/><path d="M9 9l6 6M15 9l-6 6" stroke="#f04858" stroke-width="2"/></svg></button>
          <button class="gap" aria-label="Einstellungen"><svg class="ico" viewBox="0 0 16 16"><circle cx="8" cy="8" r="4" stroke-width="2"/><path d="M8 0v4M8 12v4M0 8h4M12 8h4M2 2l3 3M11 11l3 3M14 2l-3 3M5 11l-3 3" stroke-width="2"/></svg></button>
          <button aria-label="Hilfe"><b>?</b></button>
          <button aria-label="Info"><b>i</b></button>
        </div>
      </aside>
    </div>
  </main>

  <footer class="player">
    <button class="play" aria-label="Wiedergabe"><svg viewBox="0 0 42 42"><circle cx="21" cy="21" r="21" fill="#17363f"/><path d="M13 10v22l20-11z" fill="#fff"/></svg></button>
    <span class="time">02:33 / 04:55</span>
    <input class="seek" type="range" min="0" max="295" value="153" aria-label="Position">
    <button aria-label="Einstellungen"><svg viewBox="0 0 24 24"><circle cx="12" cy="12" r="3.500" stroke-dasharray="15 3" stroke-width="1.500"/><path stroke-width="1.500" d="M10 2h4v3l3 1 2-2 2 3-1 2 1 2h2v3h-3l-1 2 2 2-3 3-2-2-2 1v3h-3v-3l-3-1-2 2-3-3 2-2-1-2H1v-3h3l1-3-2-2 3-3 2 2 2-1z"/></svg></button>
    <button aria-label="Tempo"><svg class="ff" viewBox="0 0 28 24"><path d="M7 9L1 6v12l6-3" stroke="#888"/><path d="M15 10L8 6v12l7-4" stroke="#333"/><path d="M16 6v12l11-6z" stroke-width="2"/></svg></button>
    <button aria-label="Lautstärke"><svg viewBox="0 0 24 24"><path d="M7 9H2q-2 3 0 6h5M6 9l8-7v20l-8-7" stroke-width="2"/><path d="M17 9q2 3 0 6M20 6q5 6 0 12"/></svg></button>
    <button aria-label="Verkleinern"><svg viewBox="0 0 24 24"><path d="M22 3l-7 7M14 4v7h7M3 21l8-8M4 13h7v7" stroke-width="2"/></svg></button>
  </footer>
</body>
</html>
```
FILE: styles.css
```css
* {
  box-sizing: border-box;
}

body {
  display: flex;
  flex-direction: column;
  height: 100vh;
  margin: 0;
  overflow: hidden;
  background: #fff;
  color: #e8eaf0;
  font-family: "Open Sans", "Noto Sans", sans-serif;
  font-size: 11px;
  line-height: 16px;
}

h1, h2, h3, p, ul {
  margin: 0;
  padding: 0;
  font-size: 11px;
  font-weight: normal;
  list-style: none;
}

a {
  color: inherit;
  text-decoration: none;
}

button, select, input {
  margin: 0;
  padding: 0;
  border: 0;
  background: none;
  color: inherit;
  font: inherit;
}

svg {
  flex: none;
  fill: none;
  stroke: currentColor;
}

table {
  border-collapse: collapse;
}

.sprite {
  display: none;
}

.ico {
  width: 16px;
  height: 16px;
}

.caret {
  width: 6px;
  height: 4px;
  color: #e0e3ea;
}

.app {
  display: flex;
  flex: 1;
  flex-direction: column;
  min-height: 0;
  overflow: hidden;
  background: #222a34;
}

/* title bar */
.titlebar {
  display: grid;
  grid-template-columns: 1fr auto 1fr;
  align-items: center;
  height: 22px;
}

.quick {
  display: flex;
  align-items: center;
  gap: 6px;
}

.quick button {
  display: flex;
  align-items: center;
  gap: 6px;
}

.quick .logo {
  width: 36px;
  height: 22px;
  margin: 0 3px 0 1px;
  background: #d4d5d8;
}

.quick .more {
  width: 8px;
  height: 8px;
  stroke: none;
}

.quick .dim .ico {
  color: #5f6674;
}

.title {
  display: flex;
  gap: 11px;
  padding-left: 153px;
}

.winctl {
  display: flex;
  justify-content: flex-end;
  gap: 11px;
  padding-right: 5px;
}

.winctl svg {
  display: block;
  width: 12px;
  height: 12px;
  color: #fff;
}

/* ribbon tabs */
.tabs {
  display: flex;
  align-items: flex-end;
  height: 23px;
  padding-left: 3px;
}

.tabs a {
  padding: 2px 8px;
}

.tabs .active {
  background: #3d4254;
}

.tabs button {
  display: flex;
  align-items: center;
  gap: 4px;
  height: 20px;
  margin-left: 16px;
}

.mini {
  width: 14px;
  height: 8px;
  stroke: none;
}

/* ribbon */
.ribbon {
  display: grid;
  grid-template-columns: 218fr 279fr 185fr 294fr 188fr 265fr 69fr 112fr 92fr 76fr;
  height: 91px;
  background: #3d4254;
  color: #7d8396;
}

.panel {
  display: flex;
  flex-direction: column;
  min-width: 0;
  border-right: 1px solid #262c38;
}

.panel:last-child {
  border-right: 0;
}

.panel-body {
  display: grid;
  height: 72px;
  padding-top: 4px;
}

.panel-title {
  position: relative;
  display: flex;
  align-items: center;
  justify-content: center;
  gap: 6px;
  height: 19px;
  color: #f2f3f7;
  white-space: nowrap;
}

.panel-title .caret {
  width: 8px;
  height: 5px;
}

.launch {
  width: 6px;
  height: 6px;
}

.props .launch {
  position: absolute;
  right: 4px;
}

.draw .panel-body {
  grid-template-columns: 38px 46px 44px 50px 1fr;
  padding-left: 3px;
}

.modify .panel-body {
  grid-template-columns: 88px 72px 92px 1fr;
  padding-left: 5px;
}

.annotate .panel-body {
  grid-template-columns: 42px 60px 1fr;
  padding-left: 2px;
}

.layer .panel-body {
  grid-template-columns: 74px 1fr;
  gap: 2px;
  padding-left: 3px;
}

.block .panel-body {
  grid-template-columns: 50px 1fr;
}

.props .panel-body {
  grid-template-columns: 76px 16px 1fr;
  gap: 3px;
}

.groups .panel-body {
  grid-template-columns: 46px 1fr;
}

.utils .panel-body {
  grid-template-columns: 76px 1fr;
  padding-left: 5px;
}

.clip .panel-body {
  grid-template-columns: 70px 1fr;
}

.view .panel-body {
  grid-template-columns: 60px;
}

.big {
  display: flex;
  flex-direction: column;
  align-items: center;
  height: 68px;
  padding-top: 3px;
  white-space: nowrap;
}

.big > svg:first-child {
  width: 30px;
  height: 30px;
  margin-bottom: 2px;
}

.layer .big,
.props .big {
  line-height: 15px;
}

.letter {
  height: 32px;
  font-family: "Liberation Sans", Arial, sans-serif;
  font-size: 34px;
  font-weight: bold;
  line-height: 30px;
}

.pressed {
  border: 1px solid #8fb4d8;
  background: #3f5775;
}

.layer .pressed {
  display: block;
  padding: 2px 0 0;
  text-align: center;
}

.layer .pressed svg,
.props .big svg {
  display: block;
  margin: 0 auto 2px;
}

.props .big {
  display: block;
}

.stack {
  display: flex;
  flex-direction: column;
  min-width: 0;
}

.tool {
  display: flex;
  align-items: center;
  gap: 4px;
  height: 22px;
  white-space: nowrap;
}

.tool .caret {
  margin-left: 3px;
}

.draw .stack {
  padding-left: 5px;
}

.groups .pressed {
  justify-content: center;
  width: 21px;
}

.groups .tool {
  padding-left: 2px;
}

.row {
  display: flex;
}

.row .tool {
  width: 22px;
  padding-left: 2px;
}

.row .tool:last-child {
  width: auto;
}

.stack.icons {
  align-items: center;
  gap: 7px;
  padding-top: 4px;
  color: #a8adb9;
}

.wheel {
  width: 15px;
  height: 15px;
  border-radius: 50%;
  background: conic-gradient(#f6c445, #f08a3c, #e2504c, #a85ad8, #4c8cf0, #4cc4b8, #7cc850, #f6c445);
}

/* drop-downs */
.drop {
  display: flex;
  align-items: center;
  gap: 6px;
  min-width: 0;
  height: 20px;
  padding: 0 4px;
  border: 1px solid #2c3240;
  background: #494f63;
}

.drop select {
  flex: 1;
  min-width: 0;
  height: 18px;
  appearance: none;
}

.layer .drop {
  width: 191px;
  height: 20px;
  margin: 2px 0 0;
  padding: 0 1px 0 2px;
  gap: 3px;
}

.layer .drop .ico {
  width: 14px;
  height: 14px;
}

.layer .swatch {
  margin: 0 2px;
}

.props .stack .drop {
  height: 20px;
  margin: 1px 1px 2px 0;
  padding: 0 1px 0 2px;
}

.props .drop {
  gap: 2px;
}

.swatch {
  width: 13px;
  height: 13px;
  border: 1px solid #565c70;
  background: #171b28;
}

.props .swatch {
  width: 15px;
  height: 15px;
  margin: 0 8px;
  border-color: #9a9fae;
}

.drop.bright {
  color: #c0c5d0;
}

.rule {
  width: 59px;
  height: 2px;
  background: #b9bdca;
}

/* drawing tabs */
.files {
  display: flex;
  align-items: flex-end;
  height: 28px;
  padding-left: 17px;
  border-bottom: 4px solid #3a4150;
}

.files a {
  display: flex;
  align-items: center;
  justify-content: space-between;
  width: 118px;
  height: 20px;
  padding: 0 12px;
  border-radius: 8px 8px 0 0;
  background: #2b323f;
}

.files .active {
  width: 114px;
  padding: 0 12px 0 9px;
  background: #3d4254;
  color: #fff;
  font-weight: 600;
}

.files svg {
  width: 8px;
  height: 8px;
  stroke-width: 2px;
}

.files button {
  height: 20px;
  margin-left: 12px;
}

/* work area */
.work {
  display: flex;
  flex: 1;
  min-height: 0;
}

.rail {
  display: flex;
  flex-direction: column;
  gap: 5px;
  width: 24px;
  padding: 4px 2px;
}

.rail button {
  width: 20px;
  height: 22px;
  background: #343a48;
}

.rail svg {
  display: block;
  margin: 0 auto;
}

.palettes {
  display: grid;
  grid-template-rows: 397fr 388fr;
  grid-template-columns: minmax(0, 1fr);
  width: 279px;
  border-right: 1px solid #262c38;
  background: #3c4252;
}

.palette {
  display: flex;
  flex-direction: column;
  min-height: 0;
  padding: 2px 2px 11px 0;
  border-bottom: 1px solid #262c38;
}

.grip {
  display: flex;
  align-items: center;
  gap: 5px;
  height: 18px;
  flex: none;
  padding-left: 4px;
  background: #2f323f;
}

.grip::before {
  width: 4px;
  height: 10px;
  background: repeating-linear-gradient(#8c919e 0 1px, transparent 1px 2px);
  content: "";
}

.picker {
  display: flex;
  align-items: center;
  gap: 7px;
  margin: 13px 8px 4px 15px;
}

.picker .drop {
  flex: 1;
}

.picker button {
  height: 16px;
}

.drop.light {
  background: #4a566e;
}

.drop .caret {
  width: 8px;
  height: 5px;
}

.props-scroll {
  flex: 1;
  min-height: 0;
  margin: 0 9px 0 2px;
  padding-left: 9px;
  overflow: hidden;
  border-left: 4px solid #2f3543;
}

.props-scroll h3 {
  display: flex;
  align-items: center;
  justify-content: space-between;
  height: 18px;
  margin-top: 4px;
  padding: 0 7px 0 6px;
  background: #2e313e;
  font-weight: bold;
}

.props-scroll h3.closed {
  margin-top: 0;
}

.props-scroll h3 + h3 {
  margin-top: 3px;
}

.props-scroll .caret {
  width: 8px;
  height: 5px;
}

.closed .caret {
  transform: rotate(90deg);
}

.props-scroll table {
  width: 236px;
  margin: -1px 0 0 16px;
  table-layout: fixed;
}

.props-scroll tr {
  height: 17px;
}

.props-scroll tr:nth-child(even) {
  height: 18px;
}

.props-scroll th,
.props-scroll td {
  padding: 0 0 0 5px;
  border: 1px solid #2f3543;
  color: #9298a6;
  line-height: 15px;
  text-align: left;
  white-space: nowrap;
}

.props-scroll td {
  padding-left: 1px;
}

.props-scroll th {
  width: 102px;
  color: #d4d7de;
  font-weight: normal;
}

.props-scroll .on {
  color: #f0f1f5;
}

.data {
  padding: 2px 10px 3px 9px;
  border: 0;
  font-family: "Liberation Sans", Arial, sans-serif;
}

.data .grip {
  margin: 0 -8px 0 -9px;
}

.data .picker {
  margin: 5px 6px 3px 0;
  gap: 12px;
}

.data .drop {
  flex: none;
  border-color: #464c60;
  background: #484e63;
}

.data .picker .drop {
  flex: 1;
}

.data .path {
  gap: 2px;
  font-size: 10px;
}

.data .drop .caret {
  flex: none;
}

.data table {
  width: 100%;
  margin-top: 5px;
}

.data tr {
  height: 15px;
  border-bottom: 1px solid #333947;
}

.data tr.head {
  height: 16px;
  background: #2e313e;
}

.data th,
.data td {
  padding: 0 4px;
  color: #f2f3f6;
  line-height: 14px;
  text-align: left;
}

.data th {
  width: 113px;
  border-right: 1px solid #333947;
  color: #9298a6;
  font-weight: normal;
}

.data .head th {
  border: 0;
  color: #fff;
  font-size: 12px;
  font-weight: bold;
}

.data .tog {
  width: 16px;
  padding: 0 4px;
  background: #2e313e;
}

.tog i {
  display: block;
  width: 8px;
  height: 8px;
  border: 1px solid #11141c;
  background: linear-gradient(#11141c, #11141c) center / 4px 1px no-repeat;
}

.data .current th {
  color: #fff;
}

.data .current td {
  color: #686e7c;
}

.rest {
  flex: 1;
  width: 130px;
  border-right: 1px solid #333947;
}

.hint {
  height: 50px;
  margin: 6px 1px 0;
  border: 1px solid #a8adba;
}

/* drawing */
.center {
  display: flex;
  flex: 1;
  flex-direction: column;
  min-width: 0;
  background: #fff;
}

.canvas {
  position: relative;
  flex: 1;
  min-height: 0;
}

.drawing {
  display: block;
  width: 100%;
  height: 100%;
  stroke: none;
}

.gray {
  fill: none;
  stroke: #76767a;
}

.outer {
  stroke: #c6cf8c;
}

.wall {
  fill: #fff;
  stroke: #7c5058;
}

.room {
  fill: #ff8080;
  stroke: #7c5058;
}

.detail {
  fill: none;
  stroke: #b84c54;
}

.stamp circle {
  stroke: #3a1014;
}

.stamp text {
  fill: #240406;
  font-family: "Liberation Sans", sans-serif;
  font-size: 5px;
  font-weight: bold;
  text-anchor: middle;
}

.dimtext {
  fill: #555;
  font-family: "Liberation Sans", sans-serif;
  font-size: 8px;
  text-anchor: middle;
}

.ucs {
  fill: #222;
  font-size: 18px;
  font-weight: 300;
  text-anchor: middle;
}

.cube text {
  fill: #f4f4f6;
  stroke: #888;
  font-family: "Liberation Sans", sans-serif;
  font-size: 18px;
  font-weight: bold;
  text-anchor: middle;
}

.cube .face {
  fill: #5c6270;
  stroke: none;
  font-size: 11px;
}

.viewlabel {
  position: absolute;
  top: 5px;
  left: 3px;
  color: #222;
}

.viewctl {
  position: absolute;
  top: 8px;
  right: 9px;
  display: flex;
  gap: 6px;
  color: #444;
}

.viewctl svg {
  display: block;
  width: 12px;
  height: 12px;
}

.wks {
  position: absolute;
  top: 179px;
  right: 58px;
  display: flex;
  align-items: center;
  gap: 5px;
  height: 16px;
  padding: 0 4px;
  border-radius: 5px;
  background: #e4e3f0;
  color: #555;
  font-size: 10px;
}

.wks svg {
  width: 8px;
  height: 6px;
}

/* dialog */
.dialog {
  position: absolute;
  top: 192px;
  left: 438px;
  width: 298px;
  border: 1px solid #4a3c44;
  background: #f2f0f4;
  box-shadow: 2px 4px 10px rgba(0, 0, 0, 0.4);
  color: #1c1c20;
  font-size: 10px;
}

.dialog-title {
  display: flex;
  align-items: center;
  height: 27px;
  padding: 0 16px 0 7px;
  background: #fff;
}

.dialog-title h2 {
  flex: 1;
}

.dialog-title svg {
  display: block;
  width: 10px;
  height: 10px;
}

.help {
  width: 20px;
  margin-right: 27px;
  font-size: 13px;
  font-weight: 600;
}

.group {
  margin: 7px 10px 0;
  padding: 3px 6px 3px;
  border: 1px solid #dcdade;
}

.lists {
  display: grid;
  grid-template-columns: 1fr 1fr;
  gap: 7px;
  margin-bottom: 4px;
}

.lists label {
  display: block;
  padding: 0 0 2px 2px;
  line-height: 16px;
}

.lists select {
  display: block;
  width: 100%;
  height: 142px;
  padding: 1px 0 0;
  overflow: hidden;
  border: 1px solid #66666c;
  border-radius: 0;
  background: #fff;
  outline: 0;
}

.lists option {
  display: block;
  height: 12px;
  min-height: 12px;
  margin: 0 1px;
  padding: 0 1px;
  line-height: 12px;
}

.lists option:checked {
  background: linear-gradient(#0078d7, #0078d7);
  color: #fff;
}

.check {
  display: flex;
  align-items: center;
  gap: 2px;
  height: 18px;
}

.check input {
  position: relative;
  width: 12px;
  height: 12px;
  margin-left: 1px;
  border: 1px solid #333;
  background: #fff;
  appearance: none;
}

.check.hover input {
  border-color: #1c6c98;
}

.check input:checked::after {
  position: absolute;
  top: 0;
  left: 3px;
  width: 4px;
  height: 7px;
  border: solid #222;
  border-width: 0 1px 1px 0;
  transform: rotate(40deg);
  content: "";
}

.actions {
  display: flex;
  gap: 6px;
  padding: 8px 11px 10px 17px;
}

.actions button {
  width: 70px;
  height: 20px;
  border: 1px solid #acaab0;
  background: #e2e0e4;
}

.actions .wide {
  width: 75px;
}

.actions .default {
  width: 68px;
  margin-left: auto;
  border: 2px solid #0c64a8;
}

.cursor {
  position: absolute;
  top: 426px;
  left: 572px;
  width: 14px;
  height: 21px;
}

/* command line */
.command {
  display: flex;
  height: 50px;
  overflow: hidden;
  border-top: 3px solid #252736;
  color: #111;
}

.cmd-side {
  display: flex;
  flex-direction: column;
  align-items: center;
  gap: 6px;
  width: 23px;
  padding-top: 3px;
  background: #2b2f3d;
}

.cmd-side svg {
  display: block;
  width: 9px;
  height: 9px;
}

.cmd-side .wrench {
  width: 14px;
  height: 14px;
}

.dots {
  width: 17px;
  height: 5px;
  background: radial-gradient(#d0d3da 1px, transparent 1px) 0 0 / 3px 3px;
}

.cmd-main {
  flex: 1;
  padding-top: 5px;
  border-right: 1px solid #111;
  font-family: "DejaVu Sans Mono", monospace;
}

.cmd-main p {
  padding-left: 2px;
  line-height: 14px;
}

.cmd-line {
  display: flex;
  align-items: center;
  gap: 3px;
  height: 20px;
  margin-top: 1px;
  padding-left: 4px;
  border-top: 1px solid #111;
}

.cmd-line svg {
  width: 16px;
  height: 14px;
}

.cmd-line .caret {
  width: 6px;
  height: 4px;
  color: #555;
}

.cmd-line input {
  flex: 1;
  font-style: italic;
}

.cmd-line input::placeholder {
  color: #777;
}

/* planner */
.planner {
  display: flex;
  flex-direction: column;
  width: 221px;
  border-top: 2px solid #1f2630;
  background: #4a5069;
}

.planner h2 {
  display: flex;
  align-items: center;
  gap: 5px;
  height: 28px;
  padding-left: 7px;
  background: #1f2630;
  white-space: nowrap;
}

.planner h2 .ico {
  width: 14px;
  height: 14px;
}

.modes {
  display: grid;
  grid-template-columns: repeat(5, 1fr);
  height: 31px;
  background: #1f2630;
}

.modes .active {
  border-top: 2px solid #d8dae2;
  background: #4a5069;
}

.modes button {
  height: 31px;
}

.modes svg {
  display: block;
  width: 24px;
  height: 24px;
  margin: 3px auto 0;
}

.planner h3 {
  padding: 4px 11px 2px;
}

.subs {
  display: flex;
  height: 26px;
  padding-left: 11px;
}

.subs button {
  width: 28px;
  height: 26px;
}

.subs .active {
  border-top: 2px solid #e4e6ec;
  background: #353d49;
}

.subs svg {
  display: block;
  margin: 0 auto;
}

.tree {
  flex: 1;
  margin: 0 10px 0 11px;
  padding-top: 2px;
  background: #353d49;
}

.item {
  display: flex;
  align-items: center;
  gap: 4px;
  width: 100%;
  height: 22px;
  padding: 0 8px 0 5px;
  white-space: nowrap;
}

.item .caret {
  width: 8px;
  height: 5px;
  margin-left: auto;
}

.item .up {
  transform: rotate(180deg);
}

.item.hover {
  width: 135px;
  background: #2e333f;
}

.item.last {
  height: 29px;
  margin-top: 3px;
  border-top: 1px solid #5c6270;
}

.storeys {
  height: 80px;
  margin: 0 6px 3px 5px;
  padding-top: 1px;
  background: #3a404e;
}

.storeys li {
  display: flex;
  align-items: center;
  height: 16px;
  color: #636a78;
}

.storeys .active {
  color: #fff;
}

.storeys span {
  flex: 1;
  margin-left: 1px;
  padding-left: 2px;
}

.storeys .active span {
  background: #4a5168;
}

.tray {
  display: flex;
  gap: 6px;
  height: 23px;
  padding: 6px 0 0 11px;
}

.tray button {
  height: 16px;
}

.tray .gap {
  margin-left: 8px;
}

.tray b {
  display: block;
  width: 16px;
  height: 16px;
  border-radius: 50%;
  background: #eef0f6;
  color: #3a4054;
  font-size: 12px;
  line-height: 16px;
}

/* video player */
.player {
  display: flex;
  align-items: center;
  gap: 22px;
  height: 51px;
  padding: 0 11px 0 5px;
  color: #222;
}

.player svg {
  display: block;
  width: 24px;
  height: 24px;
}

.player .play svg {
  width: 42px;
  height: 42px;
  stroke: none;
}

.player .ff {
  width: 28px;
  margin: 0 -2px;
}

.time {
  margin: 0 -6px 0 -3px;
  font-size: 10px;
  white-space: nowrap;
}

.seek {
  flex: 1;
  height: 12px;
  margin-right: 77px;
  background: linear-gradient(90deg, #17303a 52%, #d0d0d0 52%) center / 100% 4px no-repeat;
  appearance: none;
}

.seek::-webkit-slider-thumb {
  width: 13px;
  height: 13px;
  border-radius: 50%;
  background: #000;
  appearance: none;
}
```
